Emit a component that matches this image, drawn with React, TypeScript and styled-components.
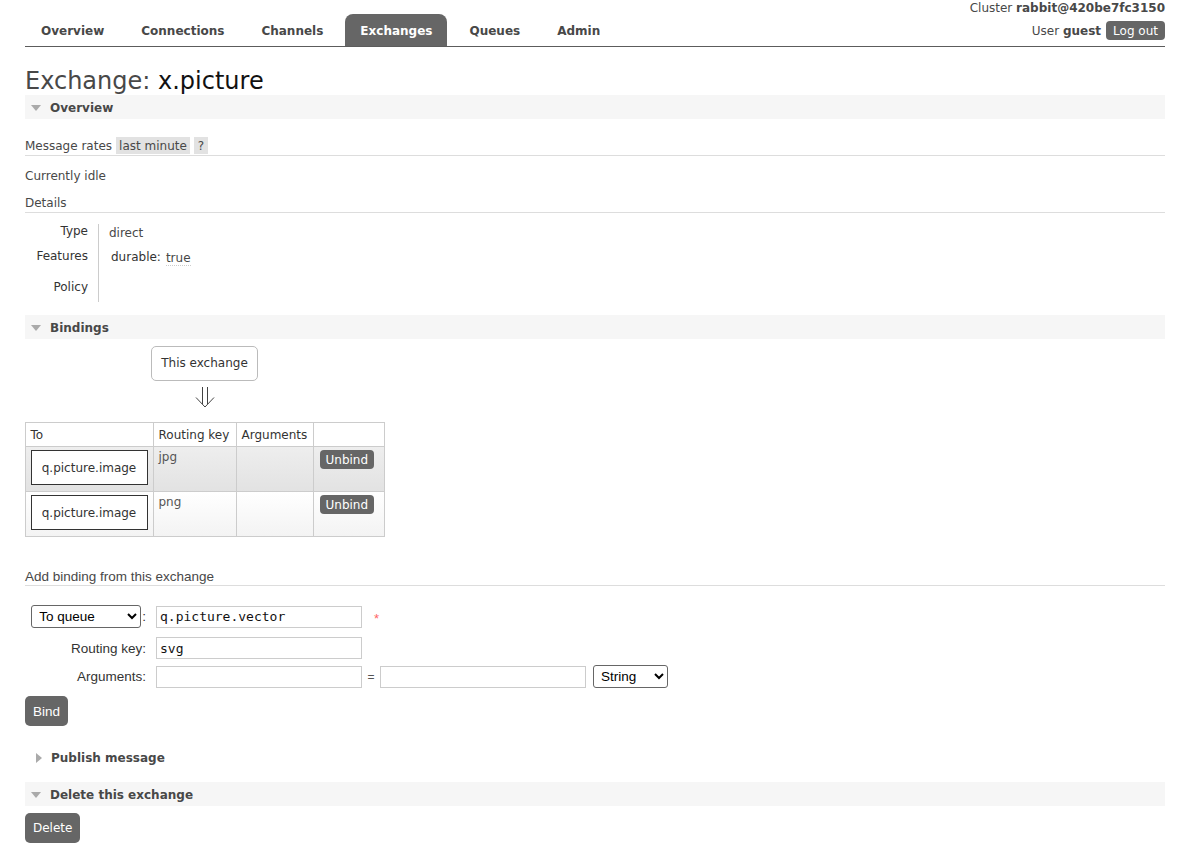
import React from "react";
import styled, { createGlobalStyle } from "styled-components";

const GlobalStyle = createGlobalStyle`
  html, body { margin: 0; padding: 0; background: #fff; }
  body {
    font-family: "DejaVu Sans", Verdana, sans-serif;
    font-size: 12px;
    color: #484848;
  }
  * { box-sizing: border-box; }
`;

const Page = styled.div`
  padding: 0 29px 40px 25px;
`;

/* ---------- header ---------- */
const Header = styled.header`
  display: flex;
  justify-content: space-between;
  align-items: flex-end;
  border-bottom: 1px solid #5c5c5c;
`;

const Nav = styled.nav`
  display: flex;
  padding-left: 1px;
`;

const Tab = styled.a<{ $active?: boolean }>`
  display: block;
  height: 32px;
  line-height: 34px;
  padding: 0 15px;
  margin-right: 7px;
  font-weight: bold;
  font-size: 12px;
  border-radius: 8px 8px 0 0;
  cursor: pointer;
  color: ${(p) => (p.$active ? "#fff" : "#484848")};
  background: ${(p) => (p.$active ? "#666" : "transparent")};
`;

const Meta = styled.div`
  display: flex;
  flex-direction: column;
  align-items: flex-end;
  padding-bottom: 6px;
`;

const MetaLine = styled.div`
  line-height: 17px;
  white-space: nowrap;
`;

const UserLine = styled.div`
  display: flex;
  align-items: center;
  gap: 5px;
  margin-top: 4px;
  white-space: nowrap;
`;

const Bold = styled.b`
  font-weight: bold;
`;

const DarkButton = styled.button<{ $h: number; $font?: string; $radius?: number; $pad?: number }>`
  display: inline-flex;
  align-items: center;
  justify-content: center;
  height: ${(p) => p.$h}px;
  padding: 0 ${(p) => p.$pad ?? 7}px;
  border: none;
  border-radius: ${(p) => p.$radius ?? 4}px;
  background: #666;
  color: #fff;
  font-family: ${(p) => p.$font ?? `"DejaVu Sans", Verdana, sans-serif`};
  font-size: ${(p) => (p.$font ? "13.5px" : "12px")};
  cursor: pointer;
  white-space: nowrap;
`;

/* ---------- title + sections ---------- */
const Title = styled.h1`
  margin: 20px 0 0;
  font-size: 24px;
  line-height: 28px;
  font-weight: normal;
  color: #484848;
  white-space: nowrap;
`;

const TitleName = styled.span`
  color: #111;
`;

const SectionBar = styled.h2<{ $filled?: boolean; $mt?: number }>`
  display: flex;
  align-items: center;
  height: 24px;
  margin: ${(p) => p.$mt ?? 0}px 0 0;
  padding: 1px 0 0 6px;
  font-size: 12px;
  font-weight: bold;
  color: #484848;
  background: ${(p) => (p.$filled ? "#f6f6f6" : "transparent")};
`;

const Caret = styled.span<{ $open: boolean }>`
  display: inline-block;
  width: 0;
  height: 0;
  margin-right: 9px;
  margin-left: ${(p) => (p.$open ? 0 : 5)}px;
  ${(p) =>
    p.$open
      ? `border-left: 5px solid transparent; border-right: 5px solid transparent; border-top: 6px solid #aaa;`
      : `border-top: 5px solid transparent; border-bottom: 5px solid transparent; border-left: 6px solid #aaa;`}
`;

const RateRow = styled.div`
  display: flex;
  align-items: flex-start;
  gap: 4px;
  height: 19px;
  margin-top: 18px;
  border-bottom: 1px solid #ddd;
  line-height: 18px;
`;

const RateTag = styled.span<{ $pad: number }>`
  display: inline-block;
  height: 17px;
  padding: 0 ${(p) => p.$pad}px;
  background: #e2e2e2;
  color: #484848;
`;

const Plain = styled.div<{ $mt: number }>`
  margin-top: ${(p) => p.$mt}px;
  line-height: 18px;
`;

const SubHeading = styled.div<{ $mt: number; $alt?: boolean }>`
  margin-top: ${(p) => p.$mt}px;
  line-height: ${(p) => (p.$alt ? 17 : 18)}px;
  height: ${(p) => (p.$alt ? 18 : 19)}px;
  border-bottom: 1px solid #ddd;
  font-family: ${(p) => (p.$alt ? `"Liberation Sans", Arial, sans-serif` : "inherit")};
  font-size: ${(p) => (p.$alt ? "13.5px" : "12px")};
`;

/* ---------- details ---------- */
const DetailsGrid = styled.div`
  display: grid;
  grid-template-columns: 74px auto;
  margin-top: 11px;
`;

const DetailLabel = styled.div<{ $h: number; $pt: number }>`
  height: ${(p) => p.$h}px;
  padding: ${(p) => p.$pt}px 10px 0 0;
  text-align: right;
  border-right: 1px solid #ccc;
  line-height: 14px;
  color: #333;
`;

const DetailValue = styled.div<{ $pt: number }>`
  padding: ${(p) => p.$pt}px 0 0 10px;
  line-height: 14px;
  display: flex;
  align-items: flex-start;
  gap: 5px;
`;

const FeatureKey = styled.span`
  margin-left: 2px;
  color: #333;
`;

const FeatureVal = styled.span`
  margin-top: 2px;
  border-bottom: 1px dotted #ccc;
  line-height: 13px;
`;

/* ---------- bindings ---------- */
const BindingsBlock = styled.div`
  display: flex;
  flex-direction: column;
  align-items: center;
  width: 359px;
`;

const ExchangeBox = styled.div`
  margin-top: 7px;
  height: 35px;
  line-height: 33px;
  padding: 0 9px;
  border: 1px solid #bbb;
  border-radius: 5px;
  color: #333;
`;

const ArrowWrap = styled.div`
  height: 41px;
  padding-top: 5px;
`;

const Table = styled.table`
  border-collapse: collapse;
  width: 359px;
  table-layout: fixed;
`;

const Th = styled.th`
  height: 24px;
  padding: 1px 5px 0;
  border: 1px solid #ccc;
  text-align: left;
  font-weight: normal;
  color: #333;
  background: #fff;
  white-space: nowrap;
`;

const Tr = styled.tr<{ $alt: boolean }>`
  height: 45px;
  background: ${(p) =>
    p.$alt
      ? "linear-gradient(#eeeeee, #e2e2e2)"
      : "linear-gradient(#ffffff, #f3f3f3)"};
`;

const Td = styled.td`
  padding: 3px 5px 0;
  border: 1px solid #ccc;
  vertical-align: top;
  line-height: 14px;
  color: #555;
`;

const QueueBox = styled.div`
  height: 35px;
  line-height: 34px;
  border: 1px solid #333;
  background: #fff;
  color: #333;
  text-align: center;
  white-space: nowrap;
`;

/* ---------- form ---------- */
const Form = styled.div`
  margin-top: 19px;
  font-family: "Liberation Sans", Arial, sans-serif;
  font-size: 13.5px;
  color: #333;
`;

const FormRow = styled.div<{ $mt?: number; $h: number }>`
  display: flex;
  align-items: center;
  height: ${(p) => p.$h}px;
  margin-top: ${(p) => p.$mt ?? 0}px;
`;

const FormLabel = styled.label`
  display: flex;
  align-items: center;
  justify-content: flex-end;
  gap: 1px;
  width: 131px;
  padding-right: 10px;
  white-space: nowrap;
`;

const Select = styled.select<{ $w: number }>`
  width: ${(p) => p.$w}px;
  height: 23px;
  padding: 0 3px;
  border: 1px solid #666;
  border-radius: 3px;
  background: #fff;
  color: #000;
  font-family: "Liberation Sans", Arial, sans-serif;
  font-size: 13.5px;
`;

const Input = styled.input`
  width: 206px;
  height: 22px;
  padding: 0 3px;
  border: 1px solid #ccc;
  background: #fff;
  color: #111;
  font-family: "DejaVu Sans Mono", "Liberation Mono", monospace;
  font-size: 13px;
  outline: none;
`;

const Required = styled.span`
  margin-left: 12px;
  color: #f66;
  font-size: 13px;
  line-height: 13px;
  padding-top: 3px;
`;

const Equals = styled.span`
  width: 18px;
  text-align: center;
  font-size: 12px;
  color: #555;
`;

const Gap = styled.span<{ $w: number }>`
  display: inline-block;
  width: ${(p) => p.$w}px;
`;

const ButtonRow = styled.div<{ $mt: number }>`
  margin-top: ${(p) => p.$mt}px;
`;

const Arrow = () => (
  <svg width="22" height="22" viewBox="0 0 22 22" fill="none" stroke="#444" strokeWidth="1">
    <path d="M8.5 1 V18" />
    <path d="M13.5 1 V18" />
    <path d="M2 11.5 L11 21 L20 11.5" />
  </svg>
);

const tabs = ["Overview", "Connections", "Channels", "Exchanges", "Queues", "Admin"];

const bindings = [
  { to: "q.picture.image", key: "jpg" },
  { to: "q.picture.image", key: "png" },
];

export default function App() {
  return (
    <Page>
      <GlobalStyle />
      <Header>
        <Nav>
          {tabs.map((t) => (
            <Tab key={t} $active={t === "Exchanges"}>
              {t}
            </Tab>
          ))}
        </Nav>
        <Meta>
          <MetaLine>
            Cluster <Bold>rabbit@420be7fc3150</Bold>
          </MetaLine>
          <UserLine>
            <span>
              User <Bold>guest</Bold>
            </span>
            <DarkButton $h={19} $pad={7}>Log out</DarkButton>
          </UserLine>
        </Meta>
      </Header>

      <Title>
        Exchange: <TitleName>x.picture</TitleName>
      </Title>

      <SectionBar $filled>
        <Caret $open />
        Overview
      </SectionBar>

      <RateRow>
        <span>Message rates</span>
        <RateTag $pad={3}>last minute</RateTag>
        <RateTag $pad={4}>?</RateTag>
      </RateRow>

      <Plain $mt={11}>Currently idle</Plain>
      <SubHeading $mt={9}>Details</SubHeading>

      <DetailsGrid>
        <DetailLabel $h={25} $pt={0}>Type</DetailLabel>
        <DetailValue $pt={2}>direct</DetailValue>
        <DetailLabel $h={25} $pt={0}>Features</DetailLabel>
        <DetailValue $pt={1}>
          <FeatureKey>durable:</FeatureKey>
          <FeatureVal>true</FeatureVal>
        </DetailValue>
        <DetailLabel $h={28} $pt={6}>Policy</DetailLabel>
        <DetailValue $pt={0} />
      </DetailsGrid>

      <SectionBar $filled $mt={13}>
        <Caret $open />
        Bindings
      </SectionBar>

      <BindingsBlock>
        <ExchangeBox>This exchange</ExchangeBox>
        <ArrowWrap>
          <Arrow />
        </ArrowWrap>
        <Table>
          <colgroup>
            <col style={{ width: 128 }} />
            <col style={{ width: 83 }} />
            <col style={{ width: 77 }} />
            <col style={{ width: 71 }} />
          </colgroup>
          <thead>
            <tr>
              <Th>To</Th>
              <Th>Routing key</Th>
              <Th>Arguments</Th>
              <Th />
            </tr>
          </thead>
          <tbody>
            {bindings.map((b, i) => (
              <Tr key={b.key} $alt={i === 0}>
                <Td>
                  <QueueBox>{b.to}</QueueBox>
                </Td>
                <Td>{b.key}</Td>
                <Td />
                <Td style={{ paddingLeft: 6 }}>
                  <DarkButton $h={19} $pad={6}>Unbind</DarkButton>
                </Td>
              </Tr>
            ))}
          </tbody>
        </Table>
      </BindingsBlock>

      <SubHeading $mt={31} $alt>Add binding from this exchange</SubHeading>

      <Form>
        <FormRow $h={23}>
          <FormLabel>
            <Select $w={110} defaultValue="queue">
              <option value="queue">To queue</option>
              <option value="exchange">To exchange</option>
            </Select>
            :
          </FormLabel>
          <Input defaultValue="q.picture.vector" />
          <Required>*</Required>
        </FormRow>
        <FormRow $h={22} $mt={9}>
          <FormLabel>Routing key:</FormLabel>
          <Input defaultValue="svg" />
        </FormRow>
        <FormRow $h={23} $mt={6}>
          <FormLabel>Arguments:</FormLabel>
          <Input />
          <Equals>=</Equals>
          <Input />
          <Gap $w={7} />
          <Select $w={75} defaultValue="string">
            <option value="string">String</option>
            <option value="number">Number</option>
            <option value="boolean">Boolean</option>
          </Select>
        </FormRow>
        <ButtonRow $mt={8}>
          <DarkButton $h={30} $pad={8} $radius={5} $font={`"Liberation Sans", Arial, sans-serif`}>
            Bind
          </DarkButton>
        </ButtonRow>
      </Form>

      <SectionBar $mt={19}>
        <Caret $open={false} />
        Publish message
      </SectionBar>

      <SectionBar $filled $mt={13}>
        <Caret $open />
        Delete this exchange
      </SectionBar>

      <ButtonRow $mt={7}>
        <DarkButton $h={30} $pad={8} $radius={5}>Delete</DarkButton>
      </ButtonRow>
    </Page>
  );
}
